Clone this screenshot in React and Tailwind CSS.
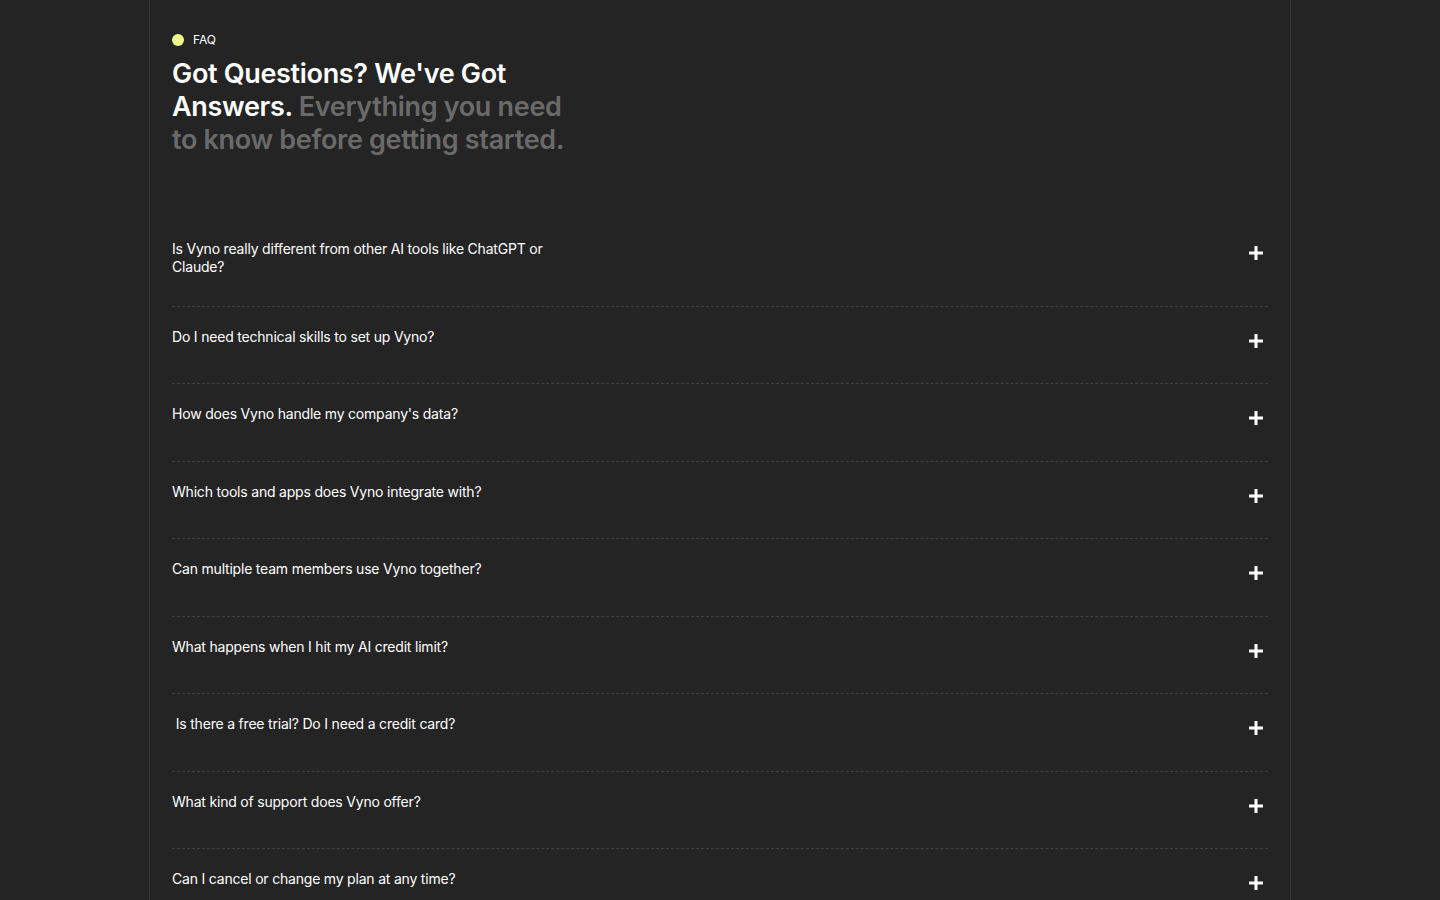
import React from 'react';

const questions = [
  'Is Vyno really different from other AI tools like ChatGPT or Claude?',
  'Do I need technical skills to set up Vyno?',
  "How does Vyno handle my company's data?",
  'Which tools and apps does Vyno integrate with?',
  'Can multiple team members use Vyno together?',
  'What happens when I hit my AI credit limit?',
  '\u00a0Is there a free trial? Do I need a credit card?',
  'What kind of support does Vyno offer?',
  'Can I cancel or change my plan at any time?',
];

const PlusIcon = () => (
  <svg width="14" height="14" viewBox="0 0 14 14" fill="white">
    <rect x="5.5" y="0" width="3" height="14" />
    <rect x="0" y="5.5" width="14" height="3" />
  </svg>
);

const FaqItem = ({ question }) => (
  <div className="border-b border-dashed border-[#414141] pt-[21px] pb-[29.5px]">
    <div className="flex justify-between items-start min-h-[26px]">
      <p className="max-w-[400px] text-[14px] leading-[18px] tracking-[-0.2px] text-white">{question}</p>
      <span className="mt-[6px] mr-[5px]">
        <PlusIcon />
      </span>
    </div>
  </div>
);

const App = () => {
  return (
    <div className="min-h-screen bg-[#242424]" style={{ fontFamily: 'Inter, "Noto Sans", sans-serif' }}>
      <div className="mx-auto w-[1142px] min-h-screen border-x border-[#333333] px-[22px] pt-[34px]">
        <div className="flex items-center gap-[9px]">
          <span className="w-3 h-3 rounded-full bg-[#eef68c]"></span>
          <span className="text-[12px] leading-none text-white">FAQ</span>
        </div>
        <h2 className="mt-[11px] max-w-[405px] text-[27px] leading-[33px] font-semibold tracking-[-0.012em] text-white">
          Got Questions? We've Got Answers.{' '}
          <span className="text-[#6a6a6a]">Everything you need to know before getting started.</span>
        </h2>
        <div className="mt-[63px]">
          {questions.map((q, i) => (
            <FaqItem question={q} key={i} />
          ))}
        </div>
      </div>
    </div>
  );
};

export default App;
